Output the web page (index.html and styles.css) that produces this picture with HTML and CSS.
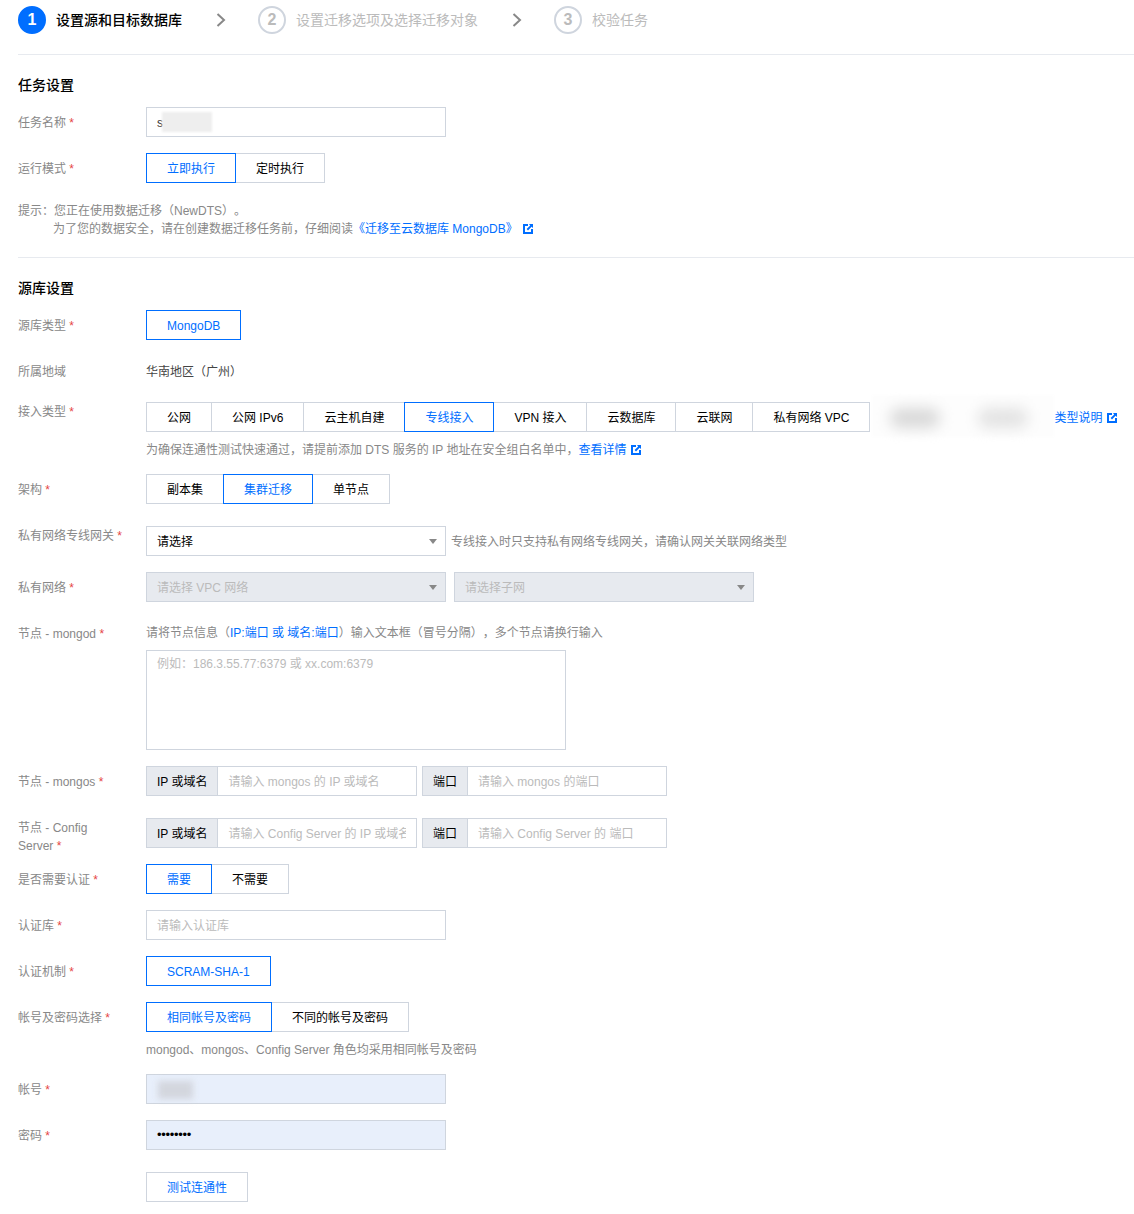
FILE: index.html
```html
<!DOCTYPE html>
<html lang="zh-CN">
<head>
<meta charset="utf-8">
<title>设置源和目标数据库</title>
<link rel="stylesheet" href="styles.css">
</head>
<body>
<div class="steps">
  <div class="step step-active"><span class="step-num">1</span><span class="step-title">设置源和目标数据库</span></div>
  <svg class="chevron" viewBox="0 0 10 14"><path d="M1.5 1 L8 7 L1.5 13" /></svg>
  <div class="step"><span class="step-num">2</span><span class="step-title">设置迁移选项及选择迁移对象</span></div>
  <svg class="chevron" viewBox="0 0 10 14"><path d="M1.5 1 L8 7 L1.5 13" /></svg>
  <div class="step"><span class="step-num">3</span><span class="step-title">校验任务</span></div>
</div>

<h2 class="section-title">任务设置</h2>
<div class="row">
  <div class="label">任务名称 <i>*</i></div>
  <div class="field"><div class="input">s<span class="blur-name"></span></div></div>
</div>
<div class="row">
  <div class="label">运行模式 <i>*</i></div>
  <div class="field"><div class="seg"><span class="seg-item on">立即执行</span><span class="seg-item">定时执行</span></div></div>
</div>
<div class="notice">
  <div>提示：您正在使用数据迁移（NewDTS）。</div>
  <div class="notice-indent">为了您的数据安全，请在创建数据迁移任务前，仔细阅读<a class="link">《迁移至云数据库 MongoDB》<svg class="ext" viewBox="0 0 10 10"><path d="M0 0H5V2H2V8H8V5H10V10H0Z" /><path d="M6 0H10V4L8.6 2.8L5 6.4L3.6 5L7.2 1.4Z" /></svg></a></div>
</div>

<h2 class="section-title">源库设置</h2>
<div class="row">
  <div class="label">源库类型 <i>*</i></div>
  <div class="field"><div class="seg"><span class="seg-item on">MongoDB</span></div></div>
</div>
<div class="row">
  <div class="label">所属地域</div>
  <div class="field plain">华南地区（广州）</div>
</div>
<div class="row">
  <div class="label label-top">接入类型 <i>*</i></div>
  <div class="field">
    <div class="inline">
      <div class="seg">
        <span class="seg-item">公网</span><span class="seg-item">公网 IPv6</span><span class="seg-item">云主机自建</span><span class="seg-item on">专线接入</span><span class="seg-item">VPN 接入</span><span class="seg-item">云数据库</span><span class="seg-item">云联网</span><span class="seg-item">私有网络 VPC</span>
      </div>
      <a class="link type-link">类型说明<svg class="ext" viewBox="0 0 10 10"><path d="M0 0H5V2H2V8H8V5H10V10H0Z" /><path d="M6 0H10V4L8.6 2.8L5 6.4L3.6 5L7.2 1.4Z" /></svg></a>
      <div class="mask"><span class="smudge smudge-a"></span><span class="smudge smudge-b"></span></div>
    </div>
    <div class="hint">为确保连通性测试快速通过，请提前添加 DTS 服务的 IP 地址在安全组白名单中，<a class="link">查看详情<svg class="ext" viewBox="0 0 10 10"><path d="M0 0H5V2H2V8H8V5H10V10H0Z" /><path d="M6 0H10V4L8.6 2.8L5 6.4L3.6 5L7.2 1.4Z" /></svg></a></div>
  </div>
</div>
<div class="row row-wide">
  <div class="label">架构 <i>*</i></div>
  <div class="field"><div class="seg"><span class="seg-item">副本集</span><span class="seg-item on">集群迁移</span><span class="seg-item">单节点</span></div></div>
</div>
<div class="row">
  <div class="label label-top">私有网络专线网关 <i>*</i></div>
  <div class="field inline">
    <div class="select">请选择</div>
    <span class="side-hint">专线接入时只支持私有网络专线网关，请确认网关关联网络类型</span>
  </div>
</div>
<div class="row">
  <div class="label">私有网络 <i>*</i></div>
  <div class="field inline gap8">
    <div class="select disabled">请选择 VPC 网络</div>
    <div class="select disabled">请选择子网</div>
  </div>
</div>
<div class="row">
  <div class="label">节点 - mongod <i>*</i></div>
  <div class="field">
    <div class="node-hint">请将节点信息（<a class="link">IP:端口 或 域名:端口</a>）输入文本框（冒号分隔），多个节点请换行输入</div>
    <div class="textarea">例如：186.3.55.77:6379 或 xx.com:6379</div>
  </div>
</div>
<div class="row row-wide">
  <div class="label">节点 - mongos <i>*</i></div>
  <div class="field inline">
    <div class="group group-host"><span class="addon">IP 或域名</span><span class="group-input">请输入 mongos 的 IP 或域名</span></div>
    <div class="group group-port"><span class="addon">端口</span><span class="group-input">请输入 mongos 的端口</span></div>
  </div>
</div>
<div class="row">
  <div class="label label-top">节点 - Config Server <i>*</i></div>
  <div class="field inline">
    <div class="group group-host"><span class="addon">IP 或域名</span><span class="group-input">请输入 Config Server 的 IP 或域名</span></div>
    <div class="group group-port"><span class="addon">端口</span><span class="group-input">请输入 Config Server 的 端口</span></div>
  </div>
</div>
<div class="row">
  <div class="label">是否需要认证 <i>*</i></div>
  <div class="field"><div class="seg"><span class="seg-item on">需要</span><span class="seg-item">不需要</span></div></div>
</div>
<div class="row">
  <div class="label">认证库 <i>*</i></div>
  <div class="field"><div class="input placeholder">请输入认证库</div></div>
</div>
<div class="row">
  <div class="label">认证机制 <i>*</i></div>
  <div class="field"><div class="seg"><span class="seg-item on">SCRAM-SHA-1</span></div></div>
</div>
<div class="row">
  <div class="label">帐号及密码选择 <i>*</i></div>
  <div class="field">
    <div class="seg"><span class="seg-item on">相同帐号及密码</span><span class="seg-item">不同的帐号及密码</span></div>
    <div class="hint">mongod、mongos、Config Server 角色均采用相同帐号及密码</div>
  </div>
</div>
<div class="row">
  <div class="label">帐号 <i>*</i></div>
  <div class="field"><div class="input autofill"><span class="blur-account"></span></div></div>
</div>
<div class="row row-wide">
  <div class="label">密码 <i>*</i></div>
  <div class="field"><div class="input autofill password">••••••••</div></div>
</div>
<div class="row">
  <div class="label"></div>
  <div class="field"><span class="test-btn">测试连通性</span></div>
</div>
</body>
</html>
```

FILE: styles.css
```css
* { box-sizing: border-box; }
html, body { margin: 0; padding: 0; background: #fff; }
body {
  padding-left: 18px;
  width: 1134px;
  font: 12px/18px "Liberation Sans", "Noto Sans CJK SC", sans-serif;
  color: #000;
  overflow-x: hidden;
  text-spacing-trim: space-all;
}
.steps {
  display: flex;
  align-items: center;
  padding: 6px 0 20px;
  border-bottom: 1px solid #e7eaef;
}
.step { display: flex; align-items: center; }
.step-num {
  width: 28px;
  height: 28px;
  border-radius: 50%;
  border: 2px solid #cfd5de;
  color: #bbb;
  font-size: 16px;
  font-weight: 700;
  line-height: 24px;
  text-align: center;
  margin-right: 10px;
}
.step-title { font-size: 14px; line-height: 20px; color: #bbb; }
.step-active .step-num { background: #006eff; border-color: #006eff; color: #fff; }
.step-active .step-title { color: #000; font-weight: 500; }
.chevron {
  width: 10px;
  height: 14px;
  margin: 0 32px 0 34px;
  fill: none;
  stroke: #888;
  stroke-width: 2;
}
.section-title {
  margin: 20px 0 12px;
  font-size: 14px;
  line-height: 20px;
  font-weight: 500;
}
.row { display: flex; margin-bottom: 16px; }
.row-wide { margin-bottom: 22px; }
.label {
  flex: none;
  width: 128px;
  padding: 7px 20px 0 0;
  color: #888;
}
.label i { font-style: normal; color: #e54545; }
.label-top { padding-top: 1px; height: 30px; }
.field { flex: none; }
.plain { height: 30px; line-height: 32px; color: #444; }
.inline { display: flex; align-items: center; position: relative; }
.gap8 { gap: 8px; }
.input {
  width: 300px;
  height: 30px;
  padding: 0 10px;
  border: 1px solid #cfd5de;
  line-height: 30px;
  color: #333;
  position: relative;
}
.placeholder { color: #bbb; }
.autofill { background: #e8effb; }
.password { color: #000; font-size: 13px; letter-spacing: -0.3px; line-height: 28px; }
.blur-name {
  position: absolute;
  left: 15px;
  top: 4px;
  width: 50px;
  height: 20px;
  background: #eee;
  filter: blur(1px);
}
.blur-account {
  position: absolute;
  left: 11px;
  top: 6px;
  width: 35px;
  height: 18px;
  background: #d3d6de;
  filter: blur(3px);
}
.seg { display: inline-flex; flex: none; }
.seg-item {
  height: 30px;
  padding: 0 20px;
  margin-right: -1px;
  border: 1px solid #cfd5de;
  line-height: 30px;
  white-space: nowrap;
  background: #fff;
}
.seg-item.on { position: relative; z-index: 1; border-color: #006eff; color: #006eff; }
.link { color: #006eff; }
.ext {
  display: inline-block;
  width: 10px;
  height: 10px;
  margin-left: 5px;
  vertical-align: -1px;
  fill: #006eff;
}
.type-link { margin-left: 185px; padding-top: 2px; white-space: nowrap; }
.mask {
  position: absolute;
  left: 726px;
  top: -7px;
  width: 182px;
  height: 42px;
  background: #fdfdfd;
  filter: blur(1px);
}
.smudge {
  position: absolute;
  top: 13px;
  height: 20px;
  border-radius: 10px;
  background: #d9d9d9;
  filter: blur(7px);
}
.smudge-a { left: 18px; width: 50px; }
.smudge-b { left: 106px; width: 50px; background: #e3e3e3; }
.notice { color: #888; margin: 19px 0 20px; padding-bottom: 19px; border-bottom: 1px solid #e7eaef; }
.notice-indent { padding-left: 35px; }
.hint { margin: 9px 0 -1px; color: #888; white-space: nowrap; }
.side-hint { margin-left: 5px; padding-top: 2px; color: #888; white-space: nowrap; }
.select {
  width: 300px;
  height: 30px;
  padding: 0 10px;
  border: 1px solid #cfd5de;
  line-height: 30px;
  position: relative;
}
.select::after {
  content: "";
  position: absolute;
  right: 8px;
  top: 12px;
  border: 4px solid transparent;
  border-top: 5px solid #888;
  border-bottom: 0;
}
.select.disabled { background: #e7eaef; color: #bbb; }
.node-hint { color: #888; margin: 6px 0 8px; white-space: nowrap; }
.textarea {
  width: 420px;
  height: 100px;
  padding: 4px 10px;
  border: 1px solid #cfd5de;
  color: #bbb;
}
.group { display: flex; height: 30px; border: 1px solid #cfd5de; }
.group-host { width: 271px; margin-right: 5px; }
.group-port { width: 245px; }
.addon {
  flex: none;
  padding: 0 10px;
  line-height: 30px;
  background: #e7eaef;
  border-right: 1px solid #cfd5de;
  color: #000;
}
.group-input {
  flex: 1;
  min-width: 0;
  margin: 0 10px;
  line-height: 30px;
  height: 28px;
  color: #bbb;
  white-space: nowrap;
  overflow: hidden;
}
.test-btn {
  display: inline-block;
  height: 30px;
  padding: 0 20px;
  border: 1px solid #cfd5de;
  line-height: 30px;
  color: #006eff;
}
```
